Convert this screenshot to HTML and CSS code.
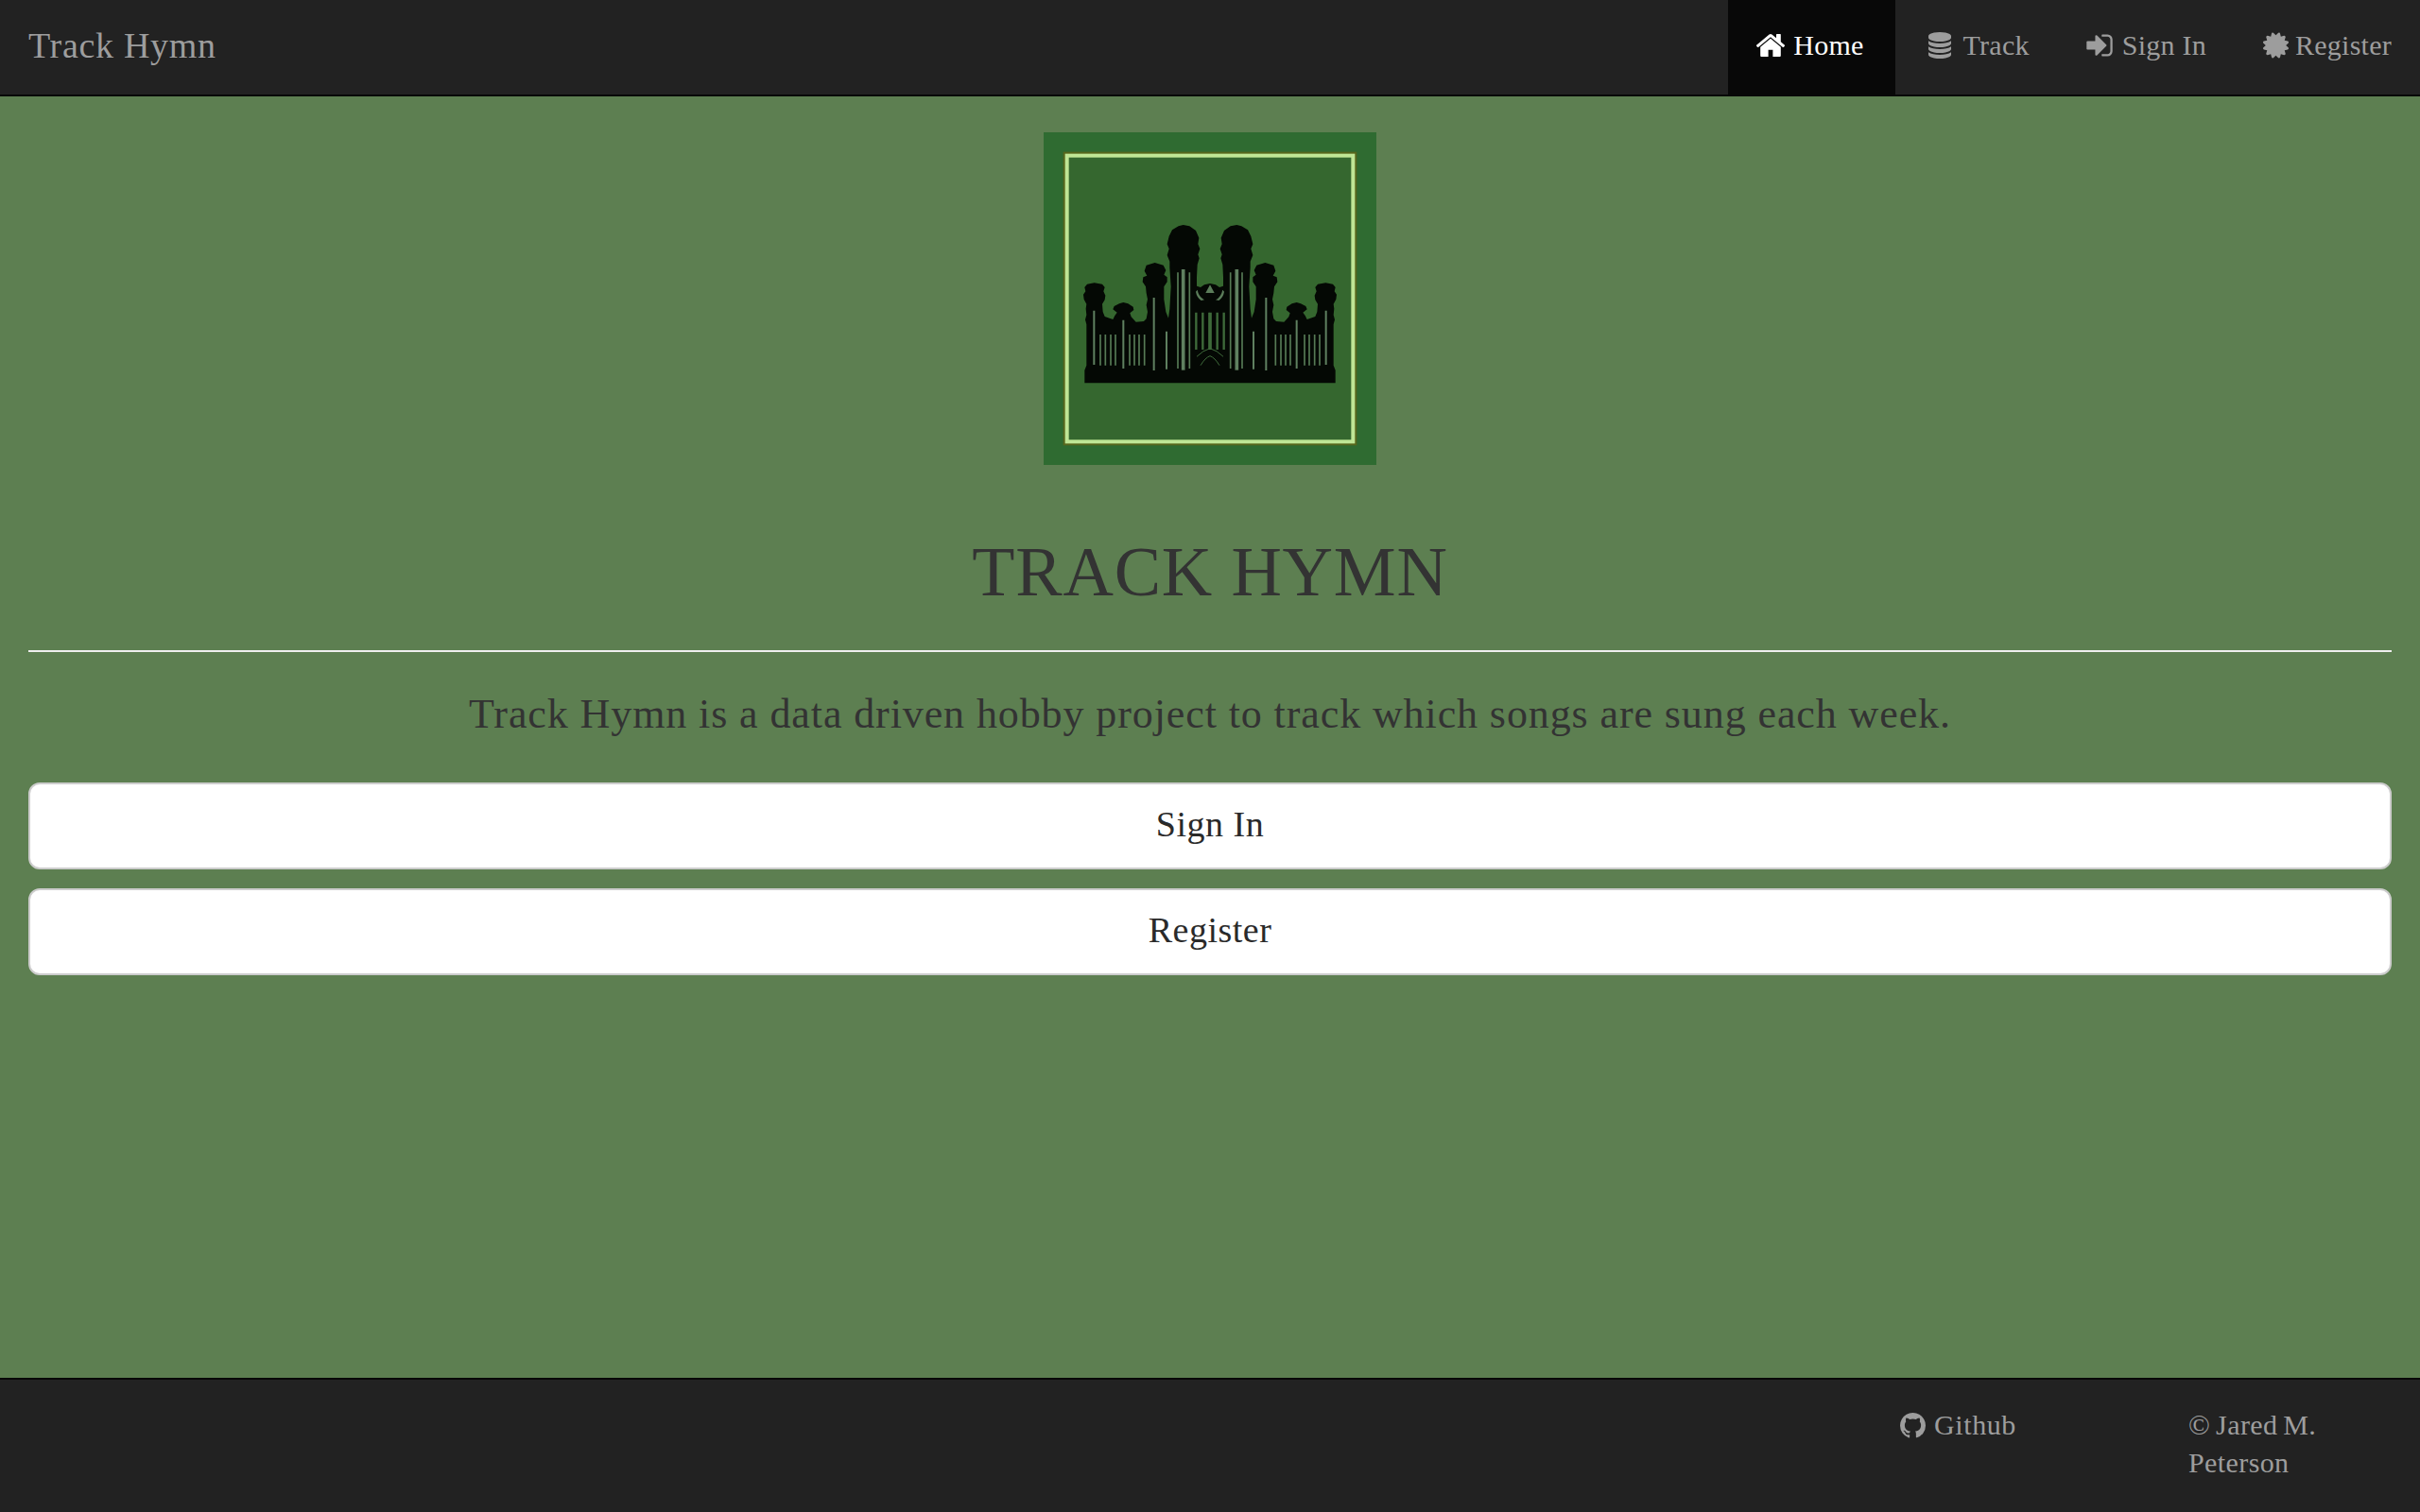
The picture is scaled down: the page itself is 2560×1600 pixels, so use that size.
FILE: index.html
```html
<!DOCTYPE html>
<html lang="en">
<head>
<meta charset="utf-8">
<title>Track Hymn</title>
<link rel="stylesheet" href="styles.css">
</head>
<body>
<header class="navbar">
  <a class="brand" href="#">Track Hymn</a>
  <nav class="nav">
    <a class="nav-item active" href="#"><svg class="icon i-home" viewBox="96 0 1600 1792"><path d="M1472 992v480q0 26-19 45t-45 19h-384v-384h-256v384h-384q-26 0-45-19t-19-45v-480q0-1 .5-3t.5-3l575-474 575 474q1 2 1 6zm223-69l-62 74q-8 9-21 11h-3q-13 0-21-7l-692-577-692 577q-12 8-24 7-13-2-21-11l-62-74q-8-10-7-23.5t11-21.5l719-599q32-26 76-26t76 26l244 204v-195q0-14 9-23t23-9h192q14 0 23 9t9 23v408l219 182q10 8 11 21.5t-7 23.5z"/></svg>Home</a>
    <a class="nav-item" href="#"><svg class="icon i-db" viewBox="128 0 1536 1792"><path d="M896 768q237 0 443-43t325-127v170q0 69-103 128t-280 93.5-385 34.5-385-34.5-280-93.5-103-128v-170q119 84 325 127t443 43zm0 768q237 0 443-43t325-127v170q0 69-103 128t-280 93.5-385 34.5-385-34.5-280-93.5-103-128v-170q119 84 325 127t443 43zm0-384q237 0 443-43t325-127v170q0 69-103 128t-280 93.5-385 34.5-385-34.5-280-93.5-103-128v-170q119 84 325 127t443 43zm0-1152q208 0 385 34.5t280 93.5 103 128v128q0 69-103 128t-280 93.5-385 34.5-385-34.5-280-93.5-103-128v-128q0-69 103-128t280-93.5 385-34.5z"/></svg>Track</a>
    <a class="nav-item" href="#"><svg class="icon i-sign" viewBox="128 0 1536 1792"><path d="M1312 896q0 26-19 45l-544 544q-19 19-45 19t-45-19-19-45v-288h-448q-26 0-45-19t-19-45v-384q0-26 19-45t45-19h448v-288q0-26 19-45t45-19 45 19l544 544q19 19 19 45zm352-352v704q0 119-84.500 203.500t-203.500 84.500h-320q-13 0-22.500-9.500t-9.500-22.500q0-4-1-20t-.5-26.500 3-23.500 10-19.500 20.500-6.500h320q66 0 113-47t47-113v-704q0-66-47-113t-113-47h-312l-11.500-1-11.500-3-8-5.500-7-9-2-13.500q0-4-1-20t-.5-26.500 3-23.500 10-19.500 20.500-6.500h320q119 0 203.500 84.500t84.500 203.500z"/></svg>Sign In</a>
    <a class="nav-item" href="#"><svg class="icon i-cert" viewBox="128 0 1536 1792"><path d="M1504 896l138 135q30 28 20 70-12 41-52 51l-188 48 53 186q12 41-19 70-29 31-70 19l-186-53-48 188q-10 40-51 52-12 2-19 2-31 0-51-22l-135-138-135 138q-28 30-70 20-41-11-51-52l-48-188-186 53q-41 12-70-19-31-29-19-70l53-186-188-48q-40-10-52-51-10-42 20-70l138-135-138-135q-30-28-20-70 12-41 52-51l188-48-53-186q-12-41 19-70 29-31 70-19l186 53 48-188q10-41 51-51 41-12 70 19l135 139 135-139q29-30 70-19 41 10 51 51l48 188 186-53q41-12 70 19 31 29 19 70l-53 186 188 48q40 10 52 51 10 42-20 70z"/></svg>Register</a>
  </nav>
</header>

<main class="content">
  <svg class="logo" viewBox="42 30 1056 1056" role="img" aria-label="Organ pipes logo">
    <defs>
      <g id="half">
        <path class="organ" d="M172 826L172 785L178 770L178 640L174 625L178 610L176 590L178 575L170 560L168 545L175 535L172 522L180 512L203 508L228 512L236 522L232 535L238 548L236 562L228 575L230 600L236 615L262 624L268 612L275 602L262 592L266 582L282 574L295 570L310 574L326 584L328 594L316 604L320 616L335 632L360 630L368 622L372 600L368 578L372 560L368 540L366 520L356 505L358 490L370 485L362 470L368 452L395 444L422 452L430 468L424 482L434 490L434 505L424 520L424 560L430 600L438 620L442 590L446 520L442 460L442 440L434 420L440 400L434 385L440 360L450 340L470 328L485 324L505 328L525 342L535 365L532 385L538 400L532 418L536 430L530 450L528 490L528 518L540 522L552 514L570 510L570 826Z"/>
        <g class="pipes">
          <path d="M202 596V768M295 626V780M392 555V786M432 662V782"/>
        </g>
        <path class="pipes wide" d="M485 465V785"/>
        <g class="pipes thin">
          <path d="M222 672V770M238 672V770M255 672V770M270 672V770M315 672V770M330 672V770M345 672V770M362 672V770M468 475V780M505 475V780"/>
        </g>
        <g class="pipes dim">
          <path d="M526 602V720M547 602V720M568 602V720"/>
        </g>
        <path class="gate" d="M528 742Q548 722 570 716M540 770Q555 745 570 740"/>
        <path class="crown-gap" d="M530 530q4 22 22 32l-10 2q-14-10-17-28zM570 514l-14 26h14z"/>
      </g>
    </defs>
    <rect class="logo-outer" x="42" y="30" width="1056" height="1056"/>
    <rect class="logo-shadow" x="116" y="104" width="908" height="908"/>
    <rect class="logo-inner" x="116" y="104" width="908" height="908"/>
    <use href="#half"/>
    <use href="#half" transform="translate(1140 0) scale(-1 1)"/>
  </svg>

  <h1 class="title">TRACK HYMN</h1>
  <hr class="rule">
  <p class="lead">Track Hymn is a data driven hobby project to track which songs are sung each week.</p>
  <a class="btn" href="#">Sign In</a>
  <a class="btn" href="#">Register</a>
</main>

<footer class="footer">
  <div class="col col-link"><a class="foot-link" href="#"><svg class="icon i-gh" viewBox="128 128 1536 1536"><path d="M1664 896q0 251-146.500 451.500t-378.500 277.500q-27 5-39.500-7t-12.500-30v-211q0-97-52-142 57-6 102.500-18t94-39 81-66.500 53-105 20.500-150.500q0-121-79-206 37-91-8-204-28-9-81 11t-92 44l-38 24q-93-26-192-26t-192 26q-16-11-42.500-27t-83.500-38.500-86-13.500q-44 113-7 204-79 85-79 206 0 85 20.500 150t52.500 105 80.500 67 94 39 102.500 18q-40 36-49 103-21 10-45 15t-57 5-65.500-21.500-55.500-62.500q-19-32-48.500-52t-49.500-24l-20-3q-21 0-29 4.500t-5 11.500 9 14 13 12l7 5q22 10 43.500 38t31.500 51l10 23q13 38 44 63t67 32 69.500 7 55.500-3.500l23-4q0 38 .5 89t.5 54q0 18-13 30t-40 7q-232-77-378.500-277.500t-146.500-451.500q0-209 103-385.500t279.500-279.500 385.500-103 385.500 103 279.500 279.500 103 385.500z"/></svg>Github</a></div>
  <div class="col col-copy">© Jared M. Peterson</div>
</footer>
</body>
</html>
```

FILE: styles.css
```css
* { box-sizing: border-box; }
html, body { margin: 0; height: 100%; }
body {
  min-height: 100vh;
  display: flex;
  flex-direction: column;
  background: #5d7f51;
  color: #333;
  font-family: "Liberation Serif", "Times New Roman", serif;
  font-size: 30px;
  line-height: 40px;
}
a { text-decoration: none; color: inherit; }

.navbar {
  display: flex;
  justify-content: space-between;
  align-items: stretch;
  height: 102px;
  padding-left: 30px;
  background: #222;
  border-bottom: 2px solid #080808;
  color: #9d9d9d;
}
.brand {
  display: flex;
  align-items: center;
  padding-bottom: 4px;
  font-size: 38px;
  letter-spacing: 0.7px;
}
.nav { display: flex; }
.nav-item {
  display: flex;
  align-items: center;
  padding: 0 30px 4px;
  letter-spacing: 0.25px;
}
.nav-item.active { padding-right: 33px; background: #080808; color: #fff; }
.icon { fill: currentColor; flex: none; }
.i-home { width: 30px; height: 34px; margin-right: 9px; }
.i-db { width: 24px; height: 28px; margin: 0 13px 0 5px; }
.i-sign { width: 28px; height: 32px; margin-right: 10px; }
.i-cert { width: 27px; height: 32px; margin-right: 7px; }
.i-gh { width: 27px; height: 27px; margin-right: 9px; vertical-align: -4px; }

.content {
  flex: 1;
  padding: 38px 30px 0;
}
.logo { display: block; width: 352px; height: 352px; margin: 0 auto; }
.logo-outer { fill: #2f6b31; }
.logo-inner { fill: #35672f; stroke: #bfe695; stroke-width: 12; }
.logo-shadow { fill: none; stroke: #56661c; stroke-width: 24; }
.organ { fill: #040804; }
.pipes { fill: none; stroke: #5f8060; stroke-width: 6; }
.pipes.wide { stroke-width: 11; }
.pipes.thin { stroke: #567a55; stroke-width: 5; }
.pipes.dim { stroke: #3e6a3a; stroke-width: 7; }
.gate { fill: none; stroke: #3e6a3a; stroke-width: 3; }
.crown-gap { fill: #5b7d5a; }

.title {
  margin: 73px 0 0;
  text-align: center;
  font-weight: 400;
  font-size: 74px;
  line-height: 80px;
  letter-spacing: 0.8px;
}
.rule {
  margin: 43px 0 0;
  height: 2px;
  border: 0;
  background: #eee;
}
.lead {
  margin: 36px 0 42px;
  text-align: center;
  font-size: 44px;
  line-height: 60px;
  letter-spacing: 0.9px;
}
.btn {
  display: flex;
  align-items: center;
  justify-content: center;
  height: 92px;
  margin-bottom: 20px;
  padding-bottom: 4px;
  background: #fff;
  border: 2px solid #ccc;
  border-radius: 12px;
  color: #2a2a2a;
  font-size: 38px;
  letter-spacing: 0.5px;
}

.footer {
  display: flex;
  justify-content: flex-end;
  height: 142px;
  padding-top: 28px;
  background: #222;
  border-top: 2px solid #080808;
  color: #9d9d9d;
  letter-spacing: 0.4px;
}
.col { padding: 0 30px; }
.col-link { width: 305px; }
.col-copy { width: 275px; word-spacing: -2px; }
.foot-link { letter-spacing: 0.6px; }
```
